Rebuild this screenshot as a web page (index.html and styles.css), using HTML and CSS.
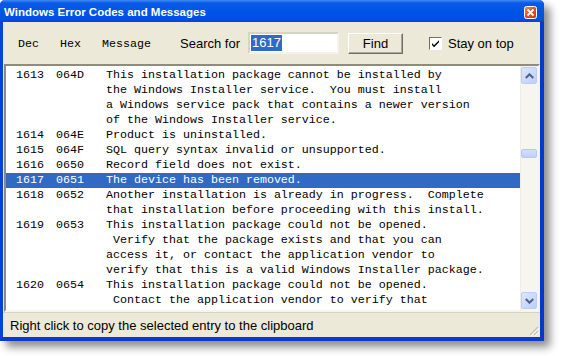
FILE: index.html
```html
<!DOCTYPE html>
<html lang="en">
<head>
  <meta charset="UTF-8">
  <title>Windows Error Codes and Messages</title>
  <link rel="stylesheet" href="styles.css">
</head>
<body>
  <div class="window">
    <div class="titlebar">
      <span class="title">Windows Error Codes and Messages</span>
      <span class="close">
        <svg width="13" height="13" viewBox="0 0 13 13">
          <defs>
            <linearGradient id="cg" x1="0" y1="0" x2="1" y2="1">
              <stop offset="0" stop-color="#f08a6a"/>
              <stop offset="0.5" stop-color="#e0502a"/>
              <stop offset="1" stop-color="#c23a14"/>
            </linearGradient>
          </defs>
          <rect x="0.5" y="0.5" width="12" height="12" rx="2" fill="url(#cg)" stroke="#fff"/>
          <path d="M3.5 3.5 L9.5 9.5 M9.5 3.5 L3.5 9.5" stroke="#fff" stroke-width="1.8"/>
        </svg>
      </span>
    </div>

    <div class="toolbar">
      <span class="head head-dec">Dec</span>
      <span class="head head-hex">Hex</span>
      <span class="head head-msg">Message</span>
      <span class="search-label">Search for</span>
      <div class="search-box"><span class="sel">1617</span></div>
      <button class="find">Find</button>
      <label class="stay">
        <span class="checkbox">
          <svg width="11" height="11" viewBox="0 0 11 11">
            <path d="M2 5 L4 7.2 L9 2.2 L9 4.2 L4 9.2 L2 7 Z" fill="#000"/>
          </svg>
        </span>
        Stay on top
      </label>
    </div>

    <div class="list">
      <div class="rows">
        <div class="row"><span class="dec">1613</span><span class="hex">064D</span><span class="msg">This installation package cannot be installed by
the Windows Installer service.  You must install
a Windows service pack that contains a newer version
of the Windows Installer service.</span></div>
        <div class="row"><span class="dec">1614</span><span class="hex">064E</span><span class="msg">Product is uninstalled.</span></div>
        <div class="row"><span class="dec">1615</span><span class="hex">064F</span><span class="msg">SQL query syntax invalid or unsupported.</span></div>
        <div class="row"><span class="dec">1616</span><span class="hex">0650</span><span class="msg">Record field does not exist.</span></div>
        <div class="row selected"><span class="dec">1617</span><span class="hex">0651</span><span class="msg">The device has been removed.</span></div>
        <div class="row"><span class="dec">1618</span><span class="hex">0652</span><span class="msg">Another installation is already in progress.  Complete
that installation before proceeding with this install.</span></div>
        <div class="row"><span class="dec">1619</span><span class="hex">0653</span><span class="msg">This installation package could not be opened.
 Verify that the package exists and that you can
access it, or contact the application vendor to
verify that this is a valid Windows Installer package.</span></div>
        <div class="row"><span class="dec">1620</span><span class="hex">0654</span><span class="msg">This installation package could not be opened.
 Contact the application vendor to verify that</span></div>
      </div>

      <div class="scrollbar">
        <div class="sb-btn">
          <svg width="9" height="6" viewBox="0 0 9 6"><path d="M0.8 5 L4.5 1.3 L8.2 5" fill="none" stroke="#4d6185" stroke-width="2"/></svg>
        </div>
        <div class="sb-track"><div class="sb-thumb"></div></div>
        <div class="sb-btn">
          <svg width="9" height="6" viewBox="0 0 9 6"><path d="M0.8 1 L4.5 4.7 L8.2 1" fill="none" stroke="#4d6185" stroke-width="2"/></svg>
        </div>
      </div>
    </div>

    <div class="statusbar">
      <span>Right click to copy the selected entry to the clipboard</span>
      <svg class="grip" width="12" height="12" viewBox="0 0 12 12">
        <path d="M11 3 L3 11 M11 7 L7 11" stroke="#c8c4b4" stroke-width="1.4"/>
        <path d="M12 4 L4 12 M12 8 L8 12" stroke="#fff" stroke-width="1"/>
      </svg>
    </div>
  </div>
</body>
</html>
```

FILE: styles.css
```css
body {
  margin: 0;
  background: #fff;
  width: 561px;
  height: 356px;
  overflow: hidden;
}

.window {
  width: 537px;
  height: 337px;
  border-left: 3px solid #0842d8;
  border-right: 4px solid #0838c8;
  border-bottom: 4px solid #0a3acc;
  border-radius: 5px 5px 0 0;
  background: #ece9d8;
  box-shadow: 6px 6px 9px rgba(0, 0, 0, 0.45);
  display: flex;
  flex-direction: column;
}

.titlebar {
  height: 22px;
  margin: 0 -4px 0 -3px;
  padding: 0 6px 0 4px;
  border-radius: 5px 5px 0 0;
  background: linear-gradient(#3f8cf3 0, #0a5ae8 3px, #0054e3 12px, #0150e6 19px, #0843d0 22px);
  display: flex;
  align-items: center;
  justify-content: space-between;
}

.title {
  color: #fff;
  font-family: "Liberation Sans", Arial, sans-serif;
  font-weight: bold;
  font-size: 11.5px;
  padding-top: 2px;
}

.close {
  display: flex;
  margin-top: 3px;
  margin-right: 1px;
}

.toolbar {
  height: 42px;
  display: flex;
  align-items: center;
  padding-left: 15px;
  font-family: "Liberation Sans", Arial, sans-serif;
  font-size: 13px;
  color: #000;
}

.head {
  font-family: "Liberation Mono", "Courier New", monospace;
  font-size: 11.67px;
  padding-top: 1px;
}

.head-dec { width: 42px; }
.head-hex { width: 42px; }
.head-msg { width: 78px; }

.search-label { width: 68px; }

.search-box {
  width: 87px;
  height: 18px;
  border: 2px solid #f4f2ea;
  border-top-color: #d8d4c4;
  border-left-color: #d8d4c4;
  background: #fff;
  display: flex;
  align-items: center;
}

.sel {
  background: #316ac5;
  color: #fff;
  height: 16px;
  line-height: 16px;
  padding: 0 1px;
  margin-left: 1px;
}

.find {
  margin-left: 9px;
  width: 55px;
  height: 21px;
  background: #ece9d8;
  border: 1px solid;
  border-color: #fff #716f64 #716f64 #fff;
  box-shadow: inset -1px -1px #aca899;
  font-family: "Liberation Sans", Arial, sans-serif;
  font-size: 13px;
  color: #000;
  padding: 0;
}

.stay {
  margin-left: 26px;
  display: flex;
  align-items: center;
  gap: 6px;
}

.checkbox {
  width: 11px;
  height: 11px;
  border: 1px solid;
  border-color: #716f64 #fff #fff #716f64;
  background: #fff;
  display: flex;
}

.list {
  height: 244px;
  display: flex;
  background: #fff;
  border: 2px solid;
  border-color: #8f8c7e #f5f4ee #f5f4ee #8f8c7e;
  margin-left: 1px;
}

.rows {
  flex: 1;
  overflow: hidden;
  padding-top: 2px;
  font-family: "Liberation Mono", "Courier New", monospace;
  font-size: 11.67px;
  line-height: 15px;
  color: #000;
}

.row {
  display: flex;
  padding-left: 10px;
}

.row.selected {
  background: #316ac5;
  color: #fff;
}

.dec { width: 40px; flex: none; }
.hex { width: 50px; flex: none; }
.msg { white-space: pre; }

.scrollbar {
  width: 17px;
  display: flex;
  flex-direction: column;
  background: #f6f5ef;
  border-left: 1px solid #efeee6;
}

.sb-btn {
  height: 15px;
  margin: 1px 1px 1px 0;
  border: 1px solid #bccdf5;
  border-radius: 2px;
  background: linear-gradient(135deg, #dce6fe, #bccefa);
  display: flex;
  align-items: center;
  justify-content: center;
}

.sb-track {
  flex: 1;
}

.sb-thumb {
  margin-top: 64px;
  height: 7px;
  margin-right: 1px;
  border: 1px solid #b4c6f2;
  border-radius: 2px;
  background: linear-gradient(#d2defd, #c0d0fa);
}

.statusbar {
  flex: 1;
  display: flex;
  align-items: center;
  justify-content: space-between;
  padding-left: 7px;
  border-top: 1px solid #d8d4c4;
  font-family: "Liberation Sans", Arial, sans-serif;
  font-size: 13px;
  color: #000;
}

.grip {
  align-self: flex-end;
  margin-right: 1px;
  margin-bottom: 1px;
}
```
